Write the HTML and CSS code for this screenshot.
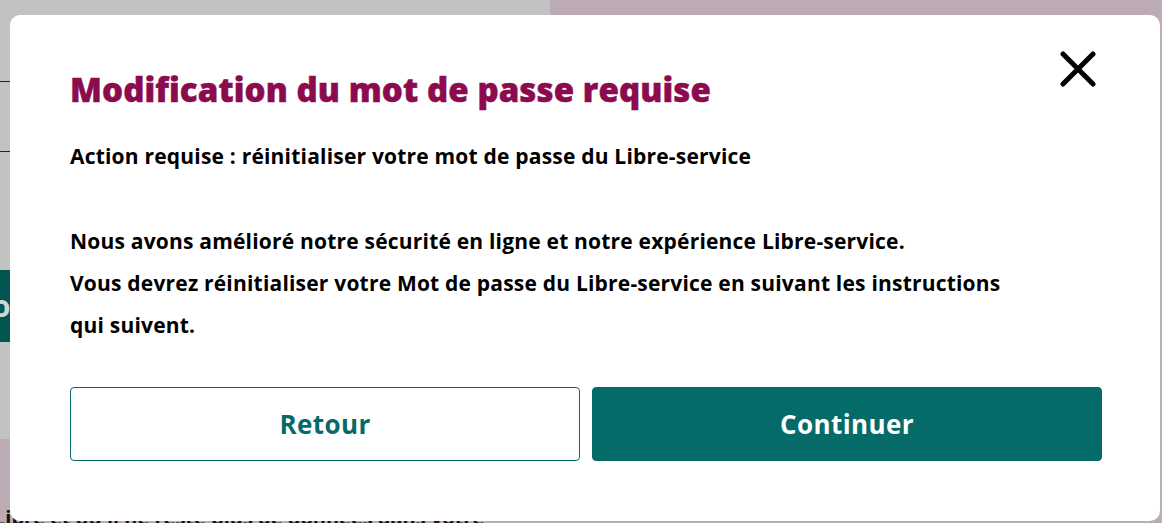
FILE: index.html
```html
<!DOCTYPE html>
<html lang="fr">
<head>
    <meta charset="UTF-8">
    <meta name="viewport" content="width=device-width, initial-scale=1.0">
    <title>Modification du mot de passe requise</title>
    <link rel="stylesheet" href="styles.css">
</head>
<body>
    <div class="page">
        <div class="page-left">
            <div class="rule rule-one"></div>
            <div class="rule rule-two"></div>
            <div class="teal-block">o</div>
            <div class="pink-block">
                <p class="behind-text">Libre et qu'il ne reste plus de données dans votre</p>
            </div>
        </div>
        <div class="page-right"></div>
    </div>

    <div class="overlay">
        <div class="modal">
            <button class="close-btn" aria-label="Fermer">
                <svg width="36" height="36" viewBox="0 0 36 36">
                    <path d="M3 3 L33 33 M33 3 L3 33" stroke="#000" stroke-width="5" stroke-linecap="round" fill="none"/>
                </svg>
            </button>
            <h2 class="modal-title">Modification du mot de passe requise</h2>
            <p class="lead">Action requise : réinitialiser votre mot de passe du Libre-service</p>
            <p class="body-text">
                Nous avons amélioré notre sécurité en ligne et notre expérience Libre-service.<br>
                Vous devrez réinitialiser votre Mot de passe du Libre-service en suivant les instructions<br>
                qui suivent.
            </p>
            <div class="modal-buttons">
                <button class="btn btn-back">Retour</button>
                <button class="btn btn-continue">Continuer</button>
            </div>
        </div>
    </div>
</body>
</html>
```

FILE: styles.css
```css
* {
    box-sizing: border-box;
}

body {
    margin: 0;
    font-family: 'Open Sans', 'Liberation Sans', Arial, sans-serif;
    background-color: #bcaab4;
    height: 523px;
    overflow: hidden;
}

.page {
    display: flex;
    height: 523px;
}

.page-left {
    width: 550px;
    background-color: #c2c2c2;
    display: flex;
    flex-direction: column;
}

.page-right {
    flex: 1;
    background-color: #bcaab4;
}

.rule {
    height: 1px;
    background-color: #222;
}

.rule-one {
    margin-top: 81px;
}

.rule-two {
    margin-top: 69px;
}

.teal-block {
    margin-top: 118px;
    height: 72px;
    background-color: #03564f;
    color: #c8d8d6;
    font-size: 30px;
    font-weight: bold;
    line-height: 72px;
    text-indent: -8px;
}

.pink-block {
    margin-top: 97px;
    flex: 1;
    background-color: #bcaab4;
    display: flex;
    align-items: flex-end;
}

.behind-text {
    margin: 0 0 -8px -6px;
    font-size: 20px;
    font-weight: bold;
    color: #111;
    white-space: nowrap;
}

.overlay {
    position: fixed;
    top: 0;
    left: 0;
    width: 100%;
    height: 100%;
    padding: 15px 2px 2px 10px;
    display: flex;
}

.modal {
    position: relative;
    flex: 1;
    background-color: #fff;
    border-radius: 10px;
    padding: 55px 58px 0 60px;
}

.close-btn {
    position: absolute;
    top: 36px;
    right: 64px;
    width: 36px;
    height: 36px;
    padding: 0;
    border: none;
    background: none;
    cursor: pointer;
    display: flex;
}

.modal-title {
    margin: 0;
    font-size: 33px;
    line-height: 40px;
    font-weight: 800;
    color: #8c0a4e;
    letter-spacing: 0.1px;
    -webkit-text-stroke: 0.5px #8c0a4e;
}

.lead {
    margin: 31px 0 0;
    font-size: 21px;
    line-height: 30px;
    font-weight: bold;
    color: #000;
    letter-spacing: 0.2px;
}

.body-text {
    margin: 49px 0 0;
    font-size: 21px;
    line-height: 42px;
    font-weight: bold;
    color: #000;
    letter-spacing: 0.2px;
}

.modal-buttons {
    display: flex;
    gap: 12px;
    margin-top: 41px;
}

.btn {
    flex: 1;
    height: 74px;
    border-radius: 4px;
    font-family: inherit;
    font-size: 26px;
    font-weight: bold;
    letter-spacing: 0.4px;
    cursor: pointer;
}

.btn-back {
    background-color: #fff;
    border: 1px solid #046b69;
    color: #046b69;
}

.btn-continue {
    background-color: #046b69;
    border: 1px solid #046b69;
    color: #fff;
}
```
